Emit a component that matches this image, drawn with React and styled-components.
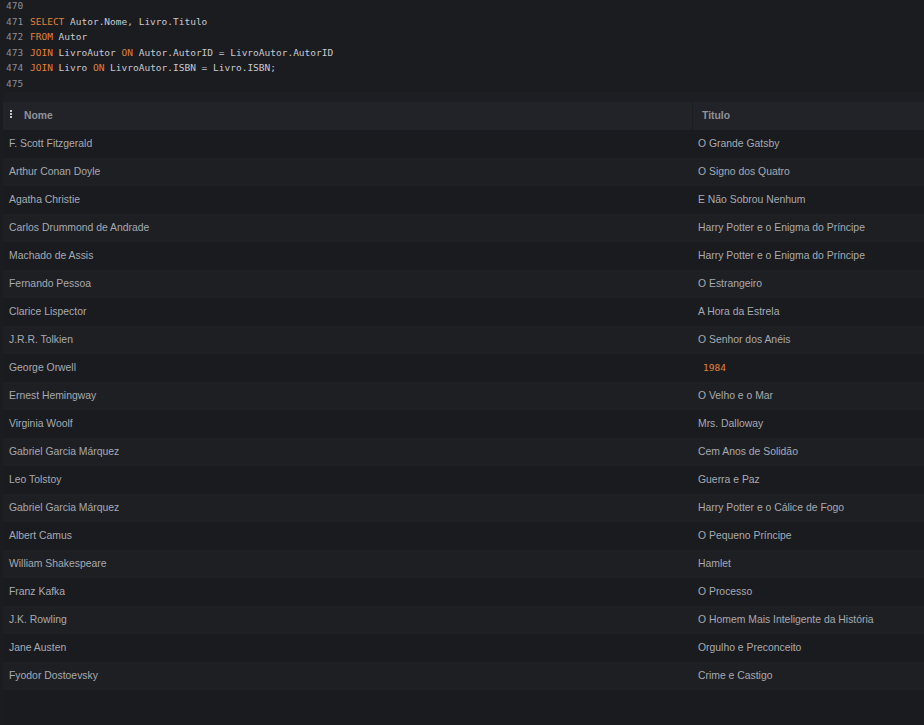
import React from 'react'
import styled, { createGlobalStyle } from 'styled-components'

const GlobalStyle = createGlobalStyle`
html, body {
  margin: 0;
  padding: 0;
  background: #1b1c20;
}
body {
  width: 924px;
  height: 725px;
  overflow: hidden;
  font-family: "Liberation Sans", Arial, sans-serif;
}
`

const Page = styled.div`
display: flex;
flex-direction: column;
height: 725px;
`

const Code = styled.div`
margin-top: -2px;
font-family: "DejaVu Sans Mono", monospace;
font-size: 9.5px;
line-height: 15.6px;
color: #c9cbd0;
white-space: pre;
`

const Line = styled.div`
display: flex;
`

const LineNo = styled.span`
width: 24px;
padding-left: 6px;
color: #8c9099;
`

const Kw = styled.span`
color: #e0823a;
`

const Results = styled.div`
flex: 1;
margin-left: 3px;
padding-top: 10px;
background: #1d1e22;
display: flex;
flex-direction: column;
`

const Table = styled.div`
flex: 1;
display: flex;
flex-direction: column;
background: #1a1b1f;
`

const Row = styled.div`
display: grid;
grid-template-columns: 689px 1fr;
height: 28px;
align-items: center;
background: ${p => p.head ? '#222328' : p.odd ? '#1e1f23' : '#1a1b1f'};
`

const Cell = styled.div`
height: 100%;
display: flex;
align-items: center;
padding-left: ${p => p.head ? '7px' : '6px'};
font-size: 10.4px;
color: ${p => p.head ? '#8e929b' : '#a7aab1'};
font-weight: ${p => p.head ? 700 : 400};
border-left: ${p => p.sep ? '1px solid #1b1c20' : 'none'};
`

const TitleCell = styled(Cell)`
padding-left: ${p => p.head ? '9px' : '6px'};
`

const Grip = styled.span`
width: 2px;
height: 8px;
margin-right: 12px;
margin-top: -3px;
background: repeating-linear-gradient(#c7c9ce 0 2px, transparent 2px 3px);
`

const Num = styled.span`
padding-left: 5px;
font-family: "DejaVu Sans Mono", monospace;
font-size: 9.5px;
color: #e0823a;
`

const rows = [
  ['F. Scott Fitzgerald', 'O Grande Gatsby'],
  ['Arthur Conan Doyle', 'O Signo dos Quatro'],
  ['Agatha Christie', 'E Não Sobrou Nenhum'],
  ['Carlos Drummond de Andrade', 'Harry Potter e o Enigma do Príncipe'],
  ['Machado de Assis', 'Harry Potter e o Enigma do Príncipe'],
  ['Fernando Pessoa', 'O Estrangeiro'],
  ['Clarice Lispector', 'A Hora da Estrela'],
  ['J.R.R. Tolkien', 'O Senhor dos Anéis'],
  ['George Orwell', 1984],
  ['Ernest Hemingway', 'O Velho e o Mar'],
  ['Virginia Woolf', 'Mrs. Dalloway'],
  ['Gabriel Garcia Márquez', 'Cem Anos de Solidão'],
  ['Leo Tolstoy', 'Guerra e Paz'],
  ['Gabriel Garcia Márquez', 'Harry Potter e o Cálice de Fogo'],
  ['Albert Camus', 'O Pequeno Príncipe'],
  ['William Shakespeare', 'Hamlet'],
  ['Franz Kafka', 'O Processo'],
  ['J.K. Rowling', 'O Homem Mais Inteligente da História'],
  ['Jane Austen', 'Orgulho e Preconceito'],
  ['Fyodor Dostoevsky', 'Crime e Castigo'],
]

export default function App() {
  return (
    <Page>
      <GlobalStyle />
      <Code>
        <Line><LineNo>470</LineNo></Line>
        <Line><LineNo>471</LineNo><span><Kw>SELECT</Kw> Autor.Nome, Livro.Titulo</span></Line>
        <Line><LineNo>472</LineNo><span><Kw>FROM</Kw> Autor</span></Line>
        <Line><LineNo>473</LineNo><span><Kw>JOIN</Kw> LivroAutor <Kw>ON</Kw> Autor.AutorID = LivroAutor.AutorID</span></Line>
        <Line><LineNo>474</LineNo><span><Kw>JOIN</Kw> Livro <Kw>ON</Kw> LivroAutor.ISBN = Livro.ISBN;</span></Line>
        <Line><LineNo>475</LineNo></Line>
      </Code>
      <Results>
        <Table>
          <Row head>
            <Cell head><Grip />Nome</Cell>
            <TitleCell head sep>Titulo</TitleCell>
          </Row>
          {rows.map((r, i) => (
            <Row key={i} odd={i % 2 === 1}>
              <Cell>{r[0]}</Cell>
              <TitleCell>{typeof r[1] === 'number' ? <Num>{r[1]}</Num> : r[1]}</TitleCell>
            </Row>
          ))}
        </Table>
      </Results>
    </Page>
  )
}
